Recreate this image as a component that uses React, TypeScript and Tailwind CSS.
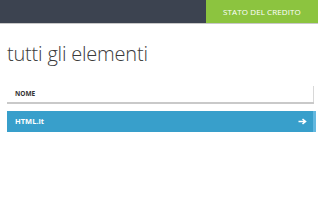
import React from "react";

export default function App() {
  return (
    <div className="w-[318px] h-[200px] bg-white overflow-hidden" style={{ fontFamily: '"Open Sans", "Noto Sans", sans-serif' }}>
      <div className="flex h-[23px] bg-[#3c4350] border-b border-[#c8c8c8] box-content">
        <div className="flex-1" />
        <div className="w-[112px] bg-[#8cc43f] flex items-center justify-center text-white text-[8px] tracking-[0.1px]">
          STATO DEL CREDITO
        </div>
      </div>
      <div className="pl-[7px] pt-[18px] text-[20px] leading-[24px] font-light text-[#3a3a3a] tracking-[-0.2px]">
        tutti gli elementi
      </div>
      <div className="ml-[7px] mr-[4px] mt-[19px] flex h-[19px] border-b-2 border-[#c9c9c9]">
        <div className="flex-1 pl-[8px] flex items-center text-[6.5px] font-bold text-[#333]">NOME</div>
        <div className="w-px bg-[#d8d8d8] mt-[1px]" />
      </div>
      <div className="ml-[7px] mr-[2px] mt-[7px] flex h-[21px]">
        <div className="flex-1 bg-[#389fcb] flex items-center justify-between pl-[8px] pr-[6px]">
          <span className="text-white text-[7.5px] font-bold">HTML.it</span>
          <svg width="9" height="7" viewBox="0 0 9 7">
            <path d="M0.5 3.5H7M4.5 1L7.5 3.5L4.5 6" stroke="white" strokeWidth="1.6" fill="none" />
          </svg>
        </div>
        <div className="w-[3px] bg-[#62b8e0]" />
      </div>
    </div>
  );
}
